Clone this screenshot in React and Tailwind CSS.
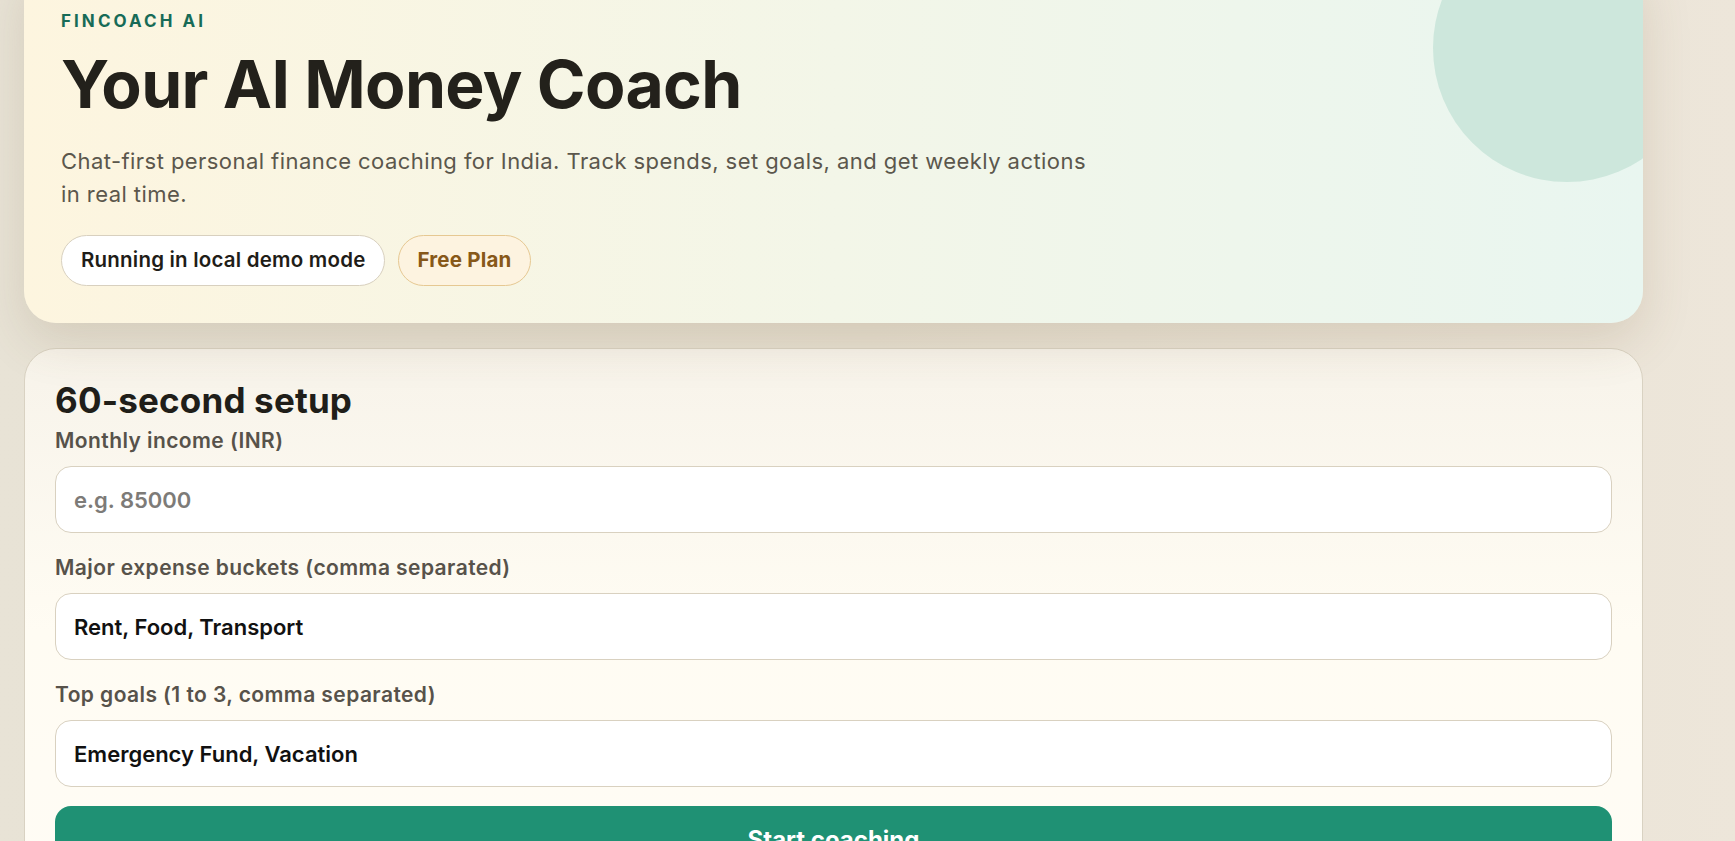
import { useState } from 'react';

function Field({ label, value, placeholder, onChange }) {
  return (
    <div className="flex flex-col">
      <label className="text-[21px] leading-[26px] font-semibold tracking-[0.02em] text-[#57524a] mb-[12px]">{label}</label>
      <input
        value={value}
        placeholder={placeholder}
        onChange={(e) => onChange(e.target.value)}
        className="h-[67px] w-full rounded-[16px] border border-[#d9d1c0] bg-white px-[18px] text-[22px] font-semibold text-[#111] placeholder:text-[#7d7b78] outline-none"
      />
    </div>
  );
}

export default function App() {
  const [income, setIncome] = useState('');
  const [buckets, setBuckets] = useState('Rent, Food, Transport');
  const [goals, setGoals] = useState('Emergency Fund, Vacation');

  return (
    <div className="h-[841px] overflow-hidden bg-gradient-to-r from-[#e8e3d6] via-[#e6dfd0] to-[#ede6da] font-['Inter','Noto_Sans',sans-serif]">
      <div className="ml-6 -mt-[40px] flex w-[1619px] flex-col gap-[25px]">
        {/* Hero */}
        <div className="relative overflow-hidden rounded-[32px] bg-gradient-to-r from-[#fdf5df] via-[#f3f6e8] to-[#e9f6f0] px-[37px] pt-[49px] pb-[37px] shadow-[0_18px_50px_rgba(110,90,50,0.16)]">
          <div className="absolute -top-[46px] left-[1409px] h-[268px] w-[268px] rounded-full bg-[#cde7dc]" />
          <div className="relative">
            <p className="text-[17px] leading-6 font-bold tracking-[0.18em] text-[#176b57]">FINCOACH AI</p>
            <h1 className="mt-[15px] text-[66px] leading-[73px] font-bold tracking-[-0.01em] text-[#23211b]">
              Your AI Money Coach
            </h1>
            <p className="mt-6 max-w-[1045px] text-[22px] leading-[33px] tracking-[0.02em] text-[#5b574c]">
              Chat-first personal finance coaching for India. Track spends, set goals, and get weekly actions in real time.
            </p>
            <div className="mt-6 flex gap-[13px]">
              <span className="flex h-[51px] items-center rounded-full border border-[#d8d0bf] bg-white px-[19px] text-[20.5px] font-semibold tracking-[0.01em] text-[#1f1d18]">
                Running in local demo mode
              </span>
              <span className="flex h-[51px] items-center rounded-full border border-[#e6c892] bg-[#fdf3e0] px-[18px] text-[20.5px] font-bold tracking-[0.01em] text-[#875819]">
                Free Plan
              </span>
            </div>
          </div>
        </div>

        {/* Setup */}
        <div className="rounded-[32px] border border-[#d9d2c2] bg-gradient-to-b from-[#f7f3ea] via-[#fffcf3] to-[#fffcf5] px-[30px] pt-[33px] pb-10">
          <h2 className="text-[35px] leading-9 font-bold tracking-[0.005em] text-[#201e19]">60-second setup</h2>
          <div className="mt-[10px] flex flex-col gap-[22px]">
            <Field label="Monthly income (INR)" value={income} placeholder="e.g. 85000" onChange={setIncome} />
            <Field label="Major expense buckets (comma separated)" value={buckets} onChange={setBuckets} />
            <Field label="Top goals (1 to 3, comma separated)" value={goals} onChange={setGoals} />
          </div>
          <button className="mt-[19px] h-[67px] w-full rounded-[16px] bg-[#1f9174] text-[24px] font-bold text-white">
            Start coaching
          </button>
        </div>
      </div>
    </div>
  );
}
